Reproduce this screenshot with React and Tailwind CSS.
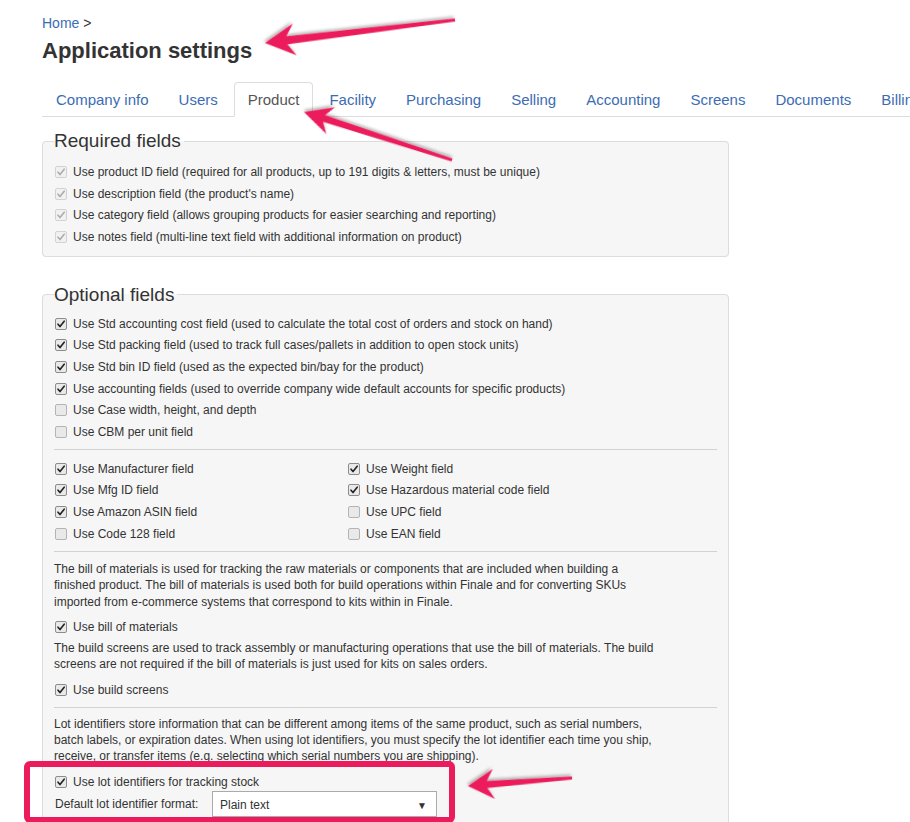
import React from "react";

const tabs = [
  "Company info",
  "Users",
  "Product",
  "Facility",
  "Purchasing",
  "Selling",
  "Accounting",
  "Screens",
  "Documents",
  "Billing",
];

const required = [
  "Use product ID field (required for all products, up to 191 digits & letters, must be unique)",
  "Use description field (the product's name)",
  "Use category field (allows grouping products for easier searching and reporting)",
  "Use notes field (multi-line text field with additional information on product)",
];

const optional = [
  ["Use Std accounting cost field (used to calculate the total cost of orders and stock on hand)", true],
  ["Use Std packing field (used to track full cases/pallets in addition to open stock units)", true],
  ["Use Std bin ID field (used as the expected bin/bay for the product)", true],
  ["Use accounting fields (used to override company wide default accounts for specific products)", true],
  ["Use Case width, height, and depth", false],
  ["Use CBM per unit field", false],
];

const twoCol = [
  ["Use Manufacturer field", true],
  ["Use Weight field", true],
  ["Use Mfg ID field", true],
  ["Use Hazardous material code field", true],
  ["Use Amazon ASIN field", true],
  ["Use UPC field", false],
  ["Use Code 128 field", false],
  ["Use EAN field", false],
];

function Check({ checked, disabled }) {
  const stroke = disabled ? "#d2d2d2" : checked ? "#8c8c8c" : "#b4b4b4";
  const fill = disabled ? "#f1f1f1" : "#e9e9e9";
  const mark = disabled ? "#adadad" : "#222";
  return (
    <svg width="12" height="12" viewBox="0 0 12 12" className="ml-[1px] mr-[6px] shrink-0">
      <rect x="0.5" y="0.5" width="11" height="11" rx="1.5" fill={fill} stroke={stroke} />
      {checked && (
        <path d="M3 6.2 L5 8.6 L9.2 3.2" fill="none" stroke={mark} strokeWidth="1.6" strokeLinecap="round" strokeLinejoin="round" />
      )}
    </svg>
  );
}

function Row({ label, checked, disabled }) {
  return (
    <div className="flex h-[21.7px] items-center">
      <Check checked={checked} disabled={disabled} />
      <span className="leading-[14px] whitespace-nowrap">{label}</span>
    </div>
  );
}

function Arrow({ x1, y1, x2, y2, hl, hw, w1, w0, notch }) {
  const len = Math.hypot(x2 - x1, y2 - y1);
  const angle = (Math.atan2(y2 - y1, x2 - x1) * 180) / Math.PI;
  const pts = [
    [0, -w0 / 2],
    [len - hl + notch, -w1 / 2],
    [len - hl, -hw],
    [len, 0],
    [len - hl, hw],
    [len - hl + notch, w1 / 2],
    [0, w0 / 2],
  ]
    .map((p) => p.join(","))
    .join(" ");
  return (
    <polygon
      points={pts}
      transform={`translate(${x1} ${y1}) rotate(${angle})`}
      fill="#ec1c5c"
      filter="url(#shadow)"
    />
  );
}

export default function App() {
  return (
    <div className="relative h-[822px] w-full overflow-hidden bg-white font-['Liberation_Sans',Arial,sans-serif] text-[12px] text-[#333]">
      <div className="pl-[42px] pt-[13px]">
        <div className="text-[14px] leading-[20px]">
          <a className="text-[#3c6cb4]">Home</a> &gt;
        </div>
        <h1 className="mt-[5px] text-[22px] font-bold leading-[26px]">Application settings</h1>

        {/* Tabs */}
        <ul className="mt-[18px] flex border-b border-[#ddd] whitespace-nowrap">
          {tabs.map((t) => (
            <li key={t} className="-mb-px mr-[2px] shrink-0">
              <a
                className={`block rounded-t border px-[13px] py-2 text-[15px] leading-[17px] ${
                  t === "Product"
                    ? "border-[#ddd] border-b-white bg-white text-[#555]"
                    : "border-transparent text-[#3c6cb4]"
                }`}
              >
                {t}
              </a>
            </li>
          ))}
        </ul>

        <div className="w-[687px]">
          {/* Required fields */}
          <fieldset className="mt-[12px] rounded border border-[#dcdcdc] bg-[#f6f6f6] px-[11px] pt-[8px] pb-[8px]">
            <legend className="pr-[3px] text-[19px] leading-[24px]">Required fields</legend>
            {required.map((r) => (
              <Row key={r} label={r} checked disabled />
            ))}
          </fieldset>

          {/* Optional fields */}
          <fieldset className="mt-[26px] rounded border border-[#dcdcdc] bg-[#f6f6f6] px-[11px] pt-[6px] pb-[20px]">
            <legend className="pr-[3px] text-[19px] leading-[24px]">Optional fields</legend>
            {optional.map(([l, c]) => (
              <Row key={l} label={l} checked={c} />
            ))}

            <div className="mt-[6px] border-t border-[#d2d2d2]"></div>

            <div className="mt-[8px] grid grid-cols-[293px_1fr]">
              {twoCol.map(([l, c]) => (
                <Row key={l} label={l} checked={c} />
              ))}
            </div>

            <div className="mt-[6px] border-t border-[#d2d2d2]"></div>

            <p className="mt-[9px] leading-[16.5px]">
              The bill of materials is used for tracking the raw materials or components that are included when building a
              <br />
              finished product. The bill of materials is used both for build operations within Finale and for converting SKUs
              <br />
              imported from e-commerce systems that correspond to kits within in Finale.
            </p>

            <div className="mt-[6px]">
              <Row label="Use bill of materials" checked />
            </div>
            <p className="mt-[2px] leading-[16.5px]">
              The build screens are used to track assembly or manufacturing operations that use the bill of materials. The build
              <br />
              screens are not required if the bill of materials is just used for kits on sales orders.
            </p>
            <div className="mt-[6px]">
              <Row label="Use build screens" checked />
            </div>

            <div className="mt-[6px] border-t border-[#d2d2d2]"></div>

            <p className="mt-[8px] leading-[16px]">
              Lot identifiers store information that can be different among items of the same product, such as serial numbers,
              <br />
              batch labels, or expiration dates. When using lot identifiers, you must specify the lot identifier each time you ship,
              <br />
              receive, or transfer items (e.g. selecting which serial numbers you are shipping).
            </p>
            <div className="mt-[8px]">
              <Row label="Use lot identifiers for tracking stock" checked />
            </div>
            <div className="-mt-[2px] flex items-center">
              <span className="w-[158px] pl-px leading-[14px]">Default lot identifier format:</span>
              <div className="flex h-[26px] w-[225px] items-center justify-between border border-[#aaa] bg-white pl-[7px] pr-[9px] pt-[2px]">
                <span>Plain text</span>
                <span className="text-[10px]">▼</span>
              </div>
            </div>
          </fieldset>
        </div>
      </div>

      {/* Annotation highlight */}
      <div className="absolute left-[24px] top-[761px] h-[62px] w-[431px] rounded-md border-[6px] border-[#ec1c5c]"></div>

      {/* Annotation arrows */}
      <svg className="pointer-events-none absolute inset-0" width="910" height="822">
        <defs>
          <filter id="shadow" x="-20%" y="-50%" width="140%" height="200%">
            <feDropShadow dx="1" dy="2" stdDeviation="1.5" floodColor="#000" floodOpacity="0.3" />
          </filter>
        </defs>
        <Arrow x1={455} y1={20} x2={265} y2={43} hl={30} hw={16} w1={8} w0={3} notch={8} />
        <Arrow x1={452} y1={160} x2={304} y2={112} hl={28} hw={14} w1={7} w0={3} notch={7} />
        <Arrow x1={572} y1={778} x2={468} y2={786} hl={26} hw={15} w1={7} w0={3} notch={7} />
      </svg>
    </div>
  );
}
